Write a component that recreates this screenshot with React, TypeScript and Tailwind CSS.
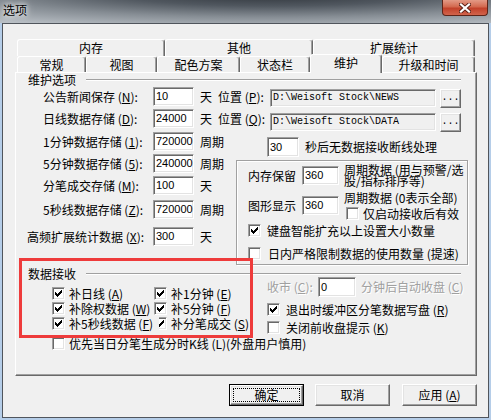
import React from "react";

// classic 3D edges
const raised =
  "border border-t-white border-l-white border-r-[#696969] border-b-[#696969] shadow-[inset_-1px_-1px_0_#a0a0a0,inset_1px_1px_0_#e3e3e3]";
const sunken =
  "border border-t-[#a0a0a0] border-l-[#a0a0a0] border-r-white border-b-white shadow-[inset_1px_1px_0_#696969,inset_-1px_-1px_0_#e3e3e3]";
const grayText = "text-[#a0a0a0] [text-shadow:1px_1px_0_#fff]";

function K({ c }: { c: string }) {
  return (
    <>
      (<span className="underline underline-offset-1">{c}</span>)
    </>
  );
}

const tick = [
  [6, 0, 1], [5, 1, 2], [0, 2, 1], [4, 2, 3], [0, 3, 2],
  [3, 3, 3], [0, 4, 5], [1, 5, 3], [2, 6, 1],
];

function Check({ on }: { on?: boolean }) {
  return (
    <div className={`w-[13px] h-[13px] shrink-0 bg-white flex items-center justify-center ${sunken}`}>
      {on && (
        <svg width="7" height="7" viewBox="0 0 7 7" shapeRendering="crispEdges">
          {tick.map(([x, y, w], i) => (
            <rect key={i} x={x} y={y} width={w} height={1} fill="#000" />
          ))}
        </svg>
      )}
    </div>
  );
}

function Num({ v, w, h = "h-[19px]", className = "" }: { v: string; w: string; h?: string; className?: string }) {
  return (
    <div
      className={`${w} ${h} ${className} shrink-0 bg-white pl-[2px] pb-[1px] flex items-center font-['Liberation_Sans',sans-serif] text-[11px] ${sunken}`}
    >
      {v}
    </div>
  );
}

function PathBox({ v, className = "" }: { v: string; className?: string }) {
  return (
    <div
      className={`w-[166px] h-[18px] shrink-0 bg-[#f0f0f0] pl-[2px] flex items-center font-['Liberation_Mono',monospace] text-[10px] whitespace-nowrap ${sunken} ${className}`}
    >
      {v}
    </div>
  );
}

function Dots({ className = "" }: { className?: string }) {
  return (
    <div
      className={`ml-[4px] w-[21px] h-[19px] shrink-0 bg-[#f0f0f0] flex items-end justify-center pb-[3px] font-['Liberation_Mono',monospace] text-[10px] ${raised} ${className}`}
    >
      ...
    </div>
  );
}

function Tab({ w, children }: { w: string; children: React.ReactNode }) {
  return (
    <div
      className={`${w} h-full shrink-0 flex items-center justify-center bg-[#f0f0f0] border border-b-0 border-t-white border-l-white border-r-[#696969] rounded-t-[3px] shadow-[inset_-1px_0_0_#a0a0a0]`}
    >
      {children}
    </div>
  );
}

function Btn({ children, def }: { children: React.ReactNode; def?: boolean }) {
  if (def)
    return (
      <div className="w-[75px] h-[22px] border border-black">
        <div className={`w-full h-full bg-[#f0f0f0] p-[2px] ${raised}`}>
          <div className="w-full h-full border border-dotted border-black flex items-center justify-center">
            {children}
          </div>
        </div>
      </div>
    );
  return (
    <div className={`w-[75px] h-[22px] bg-[#f0f0f0] flex items-center justify-center ${raised}`}>{children}</div>
  );
}

function FieldRow({
  label,
  v,
  unit,
  className = "",
  wide,
}: {
  label: React.ReactNode;
  v: string;
  unit: string;
  className?: string;
  wide?: boolean;
}) {
  return (
    <div className={`flex h-[19px] ${className}`}>
      <div
        className={`${wide ? "ml-[11px] w-[126px]" : "ml-[27px] w-[110px]"} shrink-0 leading-[19px] whitespace-nowrap`}
      >
        {label}
      </div>
      <Num v={v} w="w-[41px]" />
      <div className="ml-[6px] leading-[19px] whitespace-nowrap">{unit}</div>
    </div>
  );
}

export default function App() {
  return (
    <div className="w-[491px] h-[420px] bg-[#b5cde8] flex flex-col overflow-hidden text-[12px] leading-[12px] text-black font-['Noto_Sans_CJK_SC',sans-serif]">
      {/* title bar */}
      <div className="h-[23px] shrink-0 flex justify-between bg-[radial-gradient(90%_160%_at_55%_-30%,#2b3036_0%,#50575f_35%,#868d94_65%,#bac0c6_100%)]">
        <div className="pl-[3px] pt-[4px] [text-shadow:0_0_5px_#fff,0_0_8px_#fff]">选项</div>
        <div className="mr-[3px] w-[46px] h-[16px] rounded-b-[4px] border border-t-0 border-[#5e2418] bg-[linear-gradient(180deg,#e39a86_0%,#d3694f_45%,#c2412a_55%,#d2644c_100%)] flex items-center justify-center">
          <svg width="12" height="10" viewBox="0 0 12 10">
            <path d="M2 1.5L10 8.5M10 1.5L2 8.5" stroke="#5a2016" strokeWidth="4" strokeLinecap="square" />
            <path d="M2 1.5L10 8.5M10 1.5L2 8.5" stroke="#fff" strokeWidth="2.2" strokeLinecap="square" />
          </svg>
        </div>
      </div>

      {/* client area */}
      <div className="mx-[2px] h-[395px] shrink-0 border border-[#50555c] bg-[#f0f0f0] relative">
        <div className="pl-[12px] pt-[15px]">
          <div className="w-[462px]">
            <div className="flex ml-[2px] h-[17px]">
              <Tab w="w-[148px]">内存</Tab>
              <Tab w="w-[148px]">其他</Tab>
              <Tab w="w-[162px]">扩展统计</Tab>
            </div>
            <div className="flex ml-[2px] h-[16px] items-start">
              <Tab w="w-[69px]">常规</Tab>
              <Tab w="w-[71px]">视图</Tab>
              <Tab w="w-[83px]">配色方案</Tab>
              <Tab w="w-[70px]">状态栏</Tab>
              <div className="relative z-10 -mt-[2px] w-[72px] h-[19px] shrink-0 flex items-center justify-center pb-[2px] bg-[#f0f0f0] border border-b-0 border-t-white border-l-white border-r-[#696969] rounded-t-[3px] shadow-[inset_-1px_0_0_#a0a0a0]">
                维护
              </div>
              <Tab w="w-[93px]">升级和时间</Tab>
            </div>

            {/* panel */}
            <div className="w-[462px] h-[304px] flex flex-col border border-t-white border-l-white border-r-[#696969] border-b-[#696969] shadow-[inset_-1px_-1px_0_#a0a0a0]">
              <div className="flex items-center mt-[1px] h-[12px]">
                <span className="ml-[12px]">维护选项</span>
                <div className="ml-[10px] mr-[15px] flex-1 border-t border-t-[#a0a0a0] border-b border-b-white" />
              </div>

              <div className="flex mt-[1px] h-[19px]">
                <div className="ml-[27px] w-[110px] shrink-0 leading-[19px] whitespace-nowrap">
                  公告新闻保存 <K c="N" />:
                </div>
                <Num v="10" w="w-[41px]" />
                <div className="ml-[6px] leading-[19px]">天</div>
                <div className="ml-[6px] w-[52px] shrink-0 leading-[19px] whitespace-nowrap">
                  位置 <K c="P" />:
                </div>
                <PathBox v={"D:\\Weisoft Stock\\NEWS"} className="mt-[2px]" />
                <Dots className="mt-[2px]" />
              </div>
              <div className="flex mt-[3px] h-[19px]">
                <div className="ml-[27px] w-[110px] shrink-0 leading-[19px] whitespace-nowrap">
                  日线数据存储 <K c="D" />:
                </div>
                <Num v="24000" w="w-[41px]" />
                <div className="ml-[6px] leading-[19px]">天</div>
                <div className="ml-[6px] w-[52px] shrink-0 leading-[19px] whitespace-nowrap">
                  位置 <K c="Q" />:
                </div>
                <PathBox v={"D:\\Weisoft Stock\\DATA"} className="mt-[4px]" />
                <Dots className="mt-[4px]" />
              </div>

              <div className="flex mt-[4px]">
                <div className="w-[220px] shrink-0 flex flex-col">
                  <FieldRow label={<>1分钟数据存储 <K c="1" />:</>} v="720000" unit="周期" />
                  <FieldRow className="mt-[3px]" label={<>5分钟数据存储 <K c="5" />:</>} v="240000" unit="周期" />
                  <FieldRow className="mt-[3px]" label={<>分笔成交存储 <K c="M" />:</>} v="100" unit="天" />
                  <FieldRow className="mt-[5px]" label={<>5秒线数据存储 <K c="Z" />:</>} v="720000" unit="周期" />
                  <FieldRow className="mt-[8px]" wide label={<>高频扩展统计数据 <K c="X" />:</>} v="300" unit="天" />
                </div>
                <div className="w-[232px] shrink-0 flex flex-col">
                  <div className="flex mt-[5px] h-[20px]">
                    <Num v="30" w="w-[32px]" h="h-[20px]" className="ml-[31px]" />
                    <div className="ml-[6px] leading-[20px] whitespace-nowrap">秒后无数据接收断线处理</div>
                  </div>
                  <div className="mt-[3px] h-[105px] flex flex-col border border-[#a0a0a0] shadow-[inset_1px_1px_0_#fff,1px_1px_0_#fff]">
                    <div className="flex mt-[5px] h-[19px]">
                      <div className="ml-[11px] w-[54px] shrink-0 leading-[19px]">内存保留</div>
                      <Num v="360" w="w-[37px]" />
                      <div className="ml-[5px] -mt-[2px] leading-[11px] whitespace-nowrap">
                        周期数据 (用与预警/选
                        <br />
                        股/指标排序等)
                      </div>
                    </div>
                    <div className="flex mt-[11px] h-[19px]">
                      <div className="ml-[11px] w-[54px] shrink-0 leading-[19px]">图形显示</div>
                      <Num v="360" w="w-[37px]" />
                      <div className="ml-[5px] -mt-[4px] flex flex-col">
                        <div className="leading-[12px] whitespace-nowrap">周期数据 (0表示全部)</div>
                        <div className="flex items-center mt-[3px] h-[13px]">
                          <div className="ml-[2px]">
                            <Check />
                          </div>
                          <span className="ml-[4px] whitespace-nowrap">仅启动接收后有效</span>
                        </div>
                      </div>
                    </div>
                    <div className="flex items-center mt-[9px] h-[13px] ml-[11px]">
                      <Check on />
                      <span className="ml-[6px] whitespace-nowrap">键盘智能扩充以上设置大小数量</span>
                    </div>
                    <div className="flex items-center mt-[10px] h-[13px] ml-[11px]">
                      <Check />
                      <span className="ml-[7px] whitespace-nowrap">日内严格限制数据的使用数量 (提速)</span>
                    </div>
                  </div>
                </div>
              </div>

              <div className="flex items-center mt-[3px] h-[12px]">
                <span className="ml-[12px]">数据接收</span>
                <div className="ml-[10px] mr-[15px] flex-1 border-t border-t-[#a0a0a0] border-b border-b-white" />
              </div>

              <div className="flex">
                <div className="w-[251px] shrink-0 flex flex-col">
                  <div className="mt-[6px] flex flex-col">
                    <div className="flex h-[15px] items-center">
                      <div className="ml-[36px] w-[102px] shrink-0 flex items-center">
                        <Check on />
                        <span className="ml-[4px] whitespace-nowrap">补日线 <K c="A" /></span>
                      </div>
                      <Check on />
                      <span className="ml-[4px] whitespace-nowrap">补1分钟 <K c="E" /></span>
                    </div>
                    <div className="flex h-[15px] items-center">
                      <div className="ml-[36px] w-[102px] shrink-0 flex items-center">
                        <Check on />
                        <span className="ml-[4px] whitespace-nowrap">补除权数据 <K c="W" /></span>
                      </div>
                      <Check on />
                      <span className="ml-[4px] whitespace-nowrap">补5分钟 <K c="F" /></span>
                    </div>
                    <div className="flex h-[15px] items-center">
                      <div className="ml-[36px] w-[102px] shrink-0 flex items-center">
                        <Check on />
                        <span className="ml-[4px] whitespace-nowrap">补5秒线数据 <K c="F" /></span>
                      </div>
                      <div className="ml-[5px] w-[8px] h-[13px] shrink-0 overflow-hidden flex justify-end">
                        <Check on />
                      </div>
                      <span className="ml-[4px] whitespace-nowrap">补分笔成交 <K c="S" /></span>
                    </div>
                  </div>
                  <div className="flex items-center mt-[6px] h-[13px] ml-[36px]">
                    <Check />
                    <span className="ml-[4px] whitespace-nowrap">优先当日分笔生成分时K线 (L)(外盘用户慎用)</span>
                  </div>
                </div>

                <div className="-mt-[3px] flex flex-col">
                  <div className="flex h-[20px] items-center">
                    <div className={`w-[51px] shrink-0 whitespace-nowrap ${grayText}`}>
                      收市 <K c="C" />:
                    </div>
                    <Num v="0" w="w-[38px]" h="h-[20px]" />
                    <div className={`ml-[5px] whitespace-nowrap ${grayText}`}>
                      分钟后自动收盘 <K c="C" />
                    </div>
                  </div>
                  <div className="flex items-center mt-[6px] h-[13px]">
                    <Check on />
                    <span className="ml-[6px] whitespace-nowrap">退出时缓冲区分笔数据写盘 <K c="R" /></span>
                  </div>
                  <div className="flex items-center mt-[5px] h-[13px]">
                    <Check />
                    <span className="ml-[6px] whitespace-nowrap">关闭前收盘提示 <K c="K" /></span>
                  </div>
                </div>
              </div>
            </div>
          </div>
        </div>

        {/* dialog buttons */}
        <div className="flex justify-end gap-[11px] pr-[11px] mt-[8px]">
          <Btn def>确定</Btn>
          <Btn>取消</Btn>
          <div className="ml-[1px]">
            <Btn>
              应用 <K c="A" />
            </Btn>
          </div>
        </div>

        {/* red annotation box */}
        <div className="absolute left-[16px] top-[234px] w-[234px] h-[80px] border-[3px] border-[#ee3b3b] pointer-events-none" />
      </div>
    </div>
  );
}
